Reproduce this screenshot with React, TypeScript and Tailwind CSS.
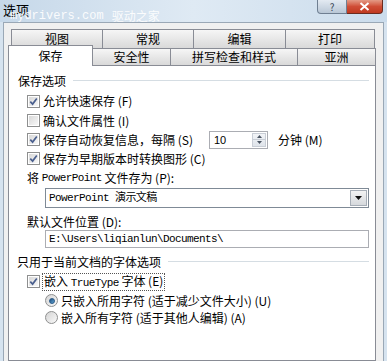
import React from "react";

const SANS = "font-['Noto_Sans_CJK_SC','Microsoft_YaHei',sans-serif]";
const MONO = "font-['Liberation_Mono','Noto_Sans_CJK_SC',monospace]";

function Check({ checked }: { checked: boolean }) {
  return (
    <div className="w-[13px] h-[13px] shrink-0 border border-[#8e8f8f] bg-white p-px">
      <div className="w-full h-full bg-gradient-to-br from-[#d8d8d8] to-[#f8f8f8] flex items-center justify-center">
        {checked && (
          <svg width="9" height="9" viewBox="0 0 9 9">
            <path d="M1.3 4.6 L3.6 7.1 L7.8 1.4" fill="none" stroke="#4a5f8e" strokeWidth="1.7" />
          </svg>
        )}
      </div>
    </div>
  );
}

function Radio({ checked }: { checked: boolean }) {
  return (
    <div className="w-[13px] h-[13px] shrink-0 rounded-full border border-[#8e8f8f] bg-gradient-to-br from-[#d4d4d4] to-[#f9f9f9] flex items-center justify-center">
      {checked && (
        <div className="w-[6px] h-[6px] rounded-full bg-gradient-to-br from-[#1f4f7c] to-[#5fa4d6] border border-[#2a5a88]" />
      )}
    </div>
  );
}

const tabCls =
  "flex items-center justify-center border-[#898c95] bg-gradient-to-b from-[#f6f6f6] to-[#d9d9d9] text-[12px] leading-none text-black";

export default function App() {
  return (
    <div className={`w-[387px] h-[361px] overflow-hidden relative flex flex-col bg-[#d6e3ef] ${SANS}`}>
      {/* title bar */}
      <div className="relative h-[22px] shrink-0 flex justify-between items-start bg-gradient-to-r from-[#c6d8e9] via-[#dfeaf4] to-[#cbdcec]">
        <div className="pl-[3px] pt-[2px] text-[13px] leading-[16px] text-black">选项</div>
        <div className="absolute left-[10px] top-[9px] text-[12px] leading-[14px] text-white opacity-90 whitespace-nowrap flex gap-[8px]">
          <span className={MONO}>mydrivers.com</span>
          <span>驱动之家</span>
        </div>
        <div className="flex mr-[4px]">
          <div className="w-[30px] h-[14px] rounded-bl-[4px] border border-t-0 border-[#6f7f92] bg-gradient-to-b from-[#e3eaf2] to-[#b9c7d6] flex items-center justify-center text-[10px] leading-none text-[#3a4656]">
            ?
          </div>
          <div className="w-[36px] h-[14px] rounded-br-[4px] border border-t-0 border-l-0 border-[#6b2b1f] bg-gradient-to-b from-[#e39a86] via-[#cf4d36] to-[#c0391f] flex items-center justify-center">
            <svg width="11" height="9" viewBox="0 0 11 9">
              <path d="M1.5 1 L9.5 8 M9.5 1 L1.5 8" stroke="white" strokeWidth="2" />
            </svg>
          </div>
        </div>
      </div>

      {/* dialog body */}
      <div className="flex-1 flex flex-col mx-[3px] border-l border-t border-r border-[#9aa8b6] bg-[#f0f0f0]">
        {/* tab row 1 */}
        <div className="flex ml-[7px] mt-[6px] h-[19px] shrink-0">
          <div className={`${tabCls} w-[92px] border border-b-0`}>视图</div>
          <div className={`${tabCls} w-[91px] border border-l-0 border-b-0`}>常规</div>
          <div className={`${tabCls} w-[92px] border border-l-0 border-b-0`}>编辑</div>
          <div className={`${tabCls} w-[89px] border border-l-0 border-b-0`}>打印</div>
        </div>
        {/* tab row 2 */}
        <div className="relative z-10 flex items-end ml-[4px] -mt-[3px] h-[20px] shrink-0">
          <div className="w-[85px] h-[21px] -mb-px border border-b-0 border-[#898c95] bg-white flex items-center justify-center text-[12px] leading-none text-black pb-[1px]">
            保存
          </div>
          <div className={`${tabCls} w-[78px] h-[17px] border border-l-0 border-b-0`}>安全性</div>
          <div className={`${tabCls} w-[127px] h-[17px] border border-l-0 border-b-0`}>拼写检查和样式</div>
          <div className={`${tabCls} w-[78px] h-[17px] border border-l-0 border-b-0`}>亚洲</div>
        </div>

        {/* panel */}
        <div className="flex-1 ml-[4px] w-[368px] border border-[#898c95] bg-white flex flex-col text-[12px] leading-[16px] text-black">
          {/* group 1 header */}
          <div className="mt-[4px] h-[21px] flex items-center pl-[9px] pr-[6px]">
            <span>保存选项</span>
            <div className="flex-1 h-px ml-[7px] bg-[#d5dde3]" />
          </div>
          <div className="h-[20px] flex items-center pl-[18px] gap-[3px]">
            <Check checked />
            <span>允许快速保存 (F)</span>
          </div>
          <div className="h-[19px] flex items-center pl-[18px] gap-[3px]">
            <Check checked={false} />
            <span>确认文件属性 (I)</span>
          </div>
          <div className="h-[19px] flex items-center pl-[18px] gap-[3px]">
            <Check checked />
            <span className="w-[163px] whitespace-nowrap">保存自动恢复信息，每隔 (S)</span>
            <div className="w-[59px] h-[18px] border border-[#abadb3] bg-white flex items-stretch">
              <span className="flex-1 pl-[4px] text-[11px] leading-[16px] font-['Liberation_Sans',sans-serif]">10</span>
              <div className="w-[14px] my-px mr-px flex flex-col border border-[#c9ced6] bg-gradient-to-b from-[#f2f4f7] to-[#dfe4ea]">
                <div className="flex-1 flex items-center justify-center">
                  <svg width="5" height="3" viewBox="0 0 5 3"><path d="M0 3 L2.5 0 L5 3Z" fill="#4b5563" /></svg>
                </div>
                <div className="flex-1 flex items-center justify-center border-t border-[#c9ced6]">
                  <svg width="5" height="3" viewBox="0 0 5 3"><path d="M0 0 L2.5 3 L5 0Z" fill="#4b5563" /></svg>
                </div>
              </div>
            </div>
            <span className="ml-[7px]">分钟 (M)</span>
          </div>
          <div className="h-[19px] flex items-center pl-[18px] gap-[3px]">
            <Check checked />
            <span>保存为早期版本时转换图形 (C)</span>
          </div>
          <div className="h-[20px] flex items-center pl-[18px] whitespace-pre">
            <span>将 </span>
            <span className={`${MONO} text-[11px] tracking-[-0.6px]`}>PowerPoint</span>
            <span> 文件存为 (P):</span>
          </div>
          <div className="h-[20px] ml-[36px] w-[324px] border border-[#7f8a96] bg-white flex items-center justify-between">
            <span className={`${MONO} pl-[3px] text-[11px] tracking-[-0.6px]`}>PowerPoint 演示文稿</span>
            <div className="w-[17px] h-[16px] mr-px border border-[#a7aeb7] bg-gradient-to-b from-[#f3f3f3] to-[#d6d9dd] flex items-center justify-center">
              <svg width="7" height="4" viewBox="0 0 7 4"><path d="M0 0 L7 0 L3.5 4Z" fill="#111" /></svg>
            </div>
          </div>
          <div className="mt-[5px] h-[17px] flex items-center pl-[18px]">
            <span>默认文件位置 (D):</span>
          </div>
          <div className="h-[18px] ml-[36px] w-[324px] border border-[#abadb3] bg-white flex items-center">
            <span className={`${MONO} pl-[3px] text-[11px] tracking-[-0.6px]`}>E:\Users\liqianlun\Documents\</span>
          </div>
          {/* group 2 header */}
          <div className="mt-[4px] h-[19px] flex items-center pl-[8px] pr-[6px]">
            <span>只用于当前文档的字体选项</span>
            <div className="flex-1 h-px ml-[7px] bg-[#d5dde3]" />
          </div>
          <div className="h-[21px] flex items-center pl-[18px] gap-[2px]">
            <Check checked />
            <span className="border border-dotted border-[#555] px-px leading-[14px] whitespace-pre">
              嵌入 <span className={`${MONO} text-[11px] tracking-[-0.6px]`}>TrueType</span> 字体 (E)
            </span>
          </div>
          <div className="h-[17px] flex items-center pl-[36px] gap-[3px]">
            <Radio checked />
            <span>只嵌入所用字符 (适于减少文件大小) (U)</span>
          </div>
          <div className="h-[17px] flex items-center pl-[36px] gap-[3px]">
            <Radio checked={false} />
            <span>嵌入所有字符 (适于其他人编辑) (A)</span>
          </div>
        </div>
      </div>
    </div>
  );
}
